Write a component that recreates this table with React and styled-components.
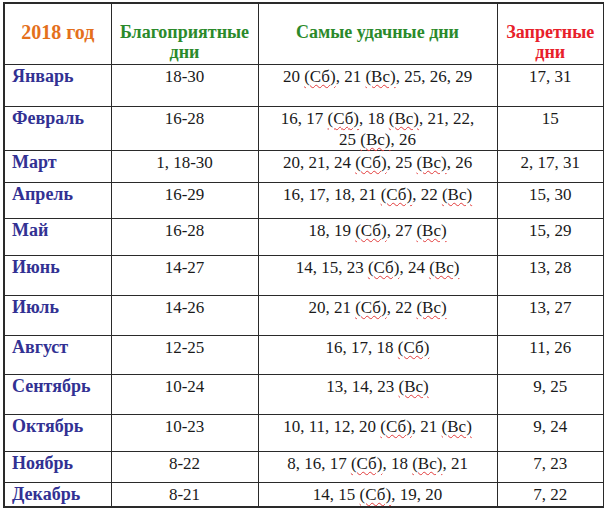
import React from "react";
import styled, { createGlobalStyle } from "styled-components";

const SERIF = `"Liberation Serif", "Times New Roman", Times, serif`;

const Global = createGlobalStyle`
  html, body { margin: 0; padding: 0; background: #fff; }
  body { font-family: ${SERIF}; }
`;

const Page = styled.div`
  padding: 2px 1px 0 3px;
  font-family: ${SERIF};
`;

const Table = styled.table`
  border-collapse: collapse;
  table-layout: fixed;
  width: 600px;
  border: 2px solid #2a2a2a;
  font-family: ${SERIF};
  font-size: 17px;
  line-height: 21px;
  color: #1a1a1a;
`;

const HeadRow = styled.tr`
  height: 61px;
`;

const HeadCell = styled.th`
  border: 1px solid #2a2a2a;
  vertical-align: top;
  padding: 18px 2px 0;
  text-align: center;
  font-family: ${SERIF};
  font-weight: bold;
  font-size: ${(p) => p.$size || 18}px;
  line-height: 20px;
  color: ${(p) => p.$color};
`;

const Row = styled.tr`
  height: ${(p) => p.$h}px;
`;

const MonthCell = styled.td`
  border: 1px solid #2a2a2a;
  vertical-align: top;
  padding: 1px 4px 0 7px;
  text-align: left;
  font-family: ${SERIF};
  font-size: 18px;
  line-height: 21px;
  font-weight: bold;
  color: #323193;
`;

const Cell = styled.td`
  border: 1px solid #2a2a2a;
  vertical-align: top;
  padding: 1px 4px 0;
  text-align: center;
  font-family: ${SERIF};
  font-size: 17px;
  line-height: 21px;
`;

const Marked = styled.span`
  text-decoration: underline wavy #e23b3b;
  text-decoration-thickness: 1px;
  text-underline-offset: 2px;
`;

const rows = [
  { m: "Январь", f: "18-30", b: "20 (Сб), 21 (Вс), 25, 26, 29", z: "17, 31", h: 42 },
  { m: "Февраль", f: "16-28", b: "16, 17 (Сб), 18 (Вс), 21, 22,\n25 (Вс), 26", z: "15", h: 43 },
  { m: "Март", f: "1, 18-30", b: "20, 21, 24 (Сб), 25 (Вс), 26", z: "2, 17, 31", h: 32 },
  { m: "Апрель", f: "16-29", b: "16, 17, 18, 21 (Сб), 22 (Вс)", z: "15, 30", h: 36 },
  { m: "Май", f: "16-28", b: "18, 19 (Сб), 27 (Вс)", z: "15, 29", h: 37 },
  { m: "Июнь", f: "14-27", b: "14, 15, 23 (Сб), 24 (Вс)", z: "13, 28", h: 40 },
  { m: "Июль", f: "14-26", b: "20, 21 (Сб), 22 (Вс)", z: "13, 27", h: 40 },
  { m: "Август", f: "12-25", b: "16, 17, 18 (Сб)", z: "11, 26", h: 39 },
  { m: "Сентябрь", f: "10-24", b: "13, 14, 23 (Вс)", z: "9, 25", h: 40 },
  { m: "Октябрь", f: "10-23", b: "10, 11, 12, 20 (Сб), 21 (Вс)", z: "9, 24", h: 37 },
  { m: "Ноябрь", f: "8-22", b: "8, 16, 17 (Сб), 18 (Вс), 21", z: "7, 23", h: 31 },
  { m: "Декабрь", f: "8-21", b: "14, 15 (Сб), 19, 20", z: "7, 22", h: 25 },
];

function renderDays(text) {
  return text.split("\n").map((line, li) => {
    const parts = line.split(/(\((?:Сб|Вс)\))/);
    return (
      <React.Fragment key={li}>
        {li > 0 && <br />}
        {parts.map((p, i) =>
          /^\((Сб|Вс)\)$/.test(p) ? <Marked key={i}>{p}</Marked> : <React.Fragment key={i}>{p}</React.Fragment>
        )}
      </React.Fragment>
    );
  });
}

export default function App() {
  return (
    <Page>
      <Global />
      <Table>
        <colgroup>
          <col style={{ width: 107 }} />
          <col style={{ width: 147 }} />
          <col style={{ width: 239 }} />
          <col style={{ width: 107 }} />
        </colgroup>
        <thead>
          <HeadRow>
            <HeadCell $color="#e4701c" $size={20}>2018 год</HeadCell>
            <HeadCell $color="#2b8a2b">Благоприятные<br />дни</HeadCell>
            <HeadCell $color="#2b8a2b">Самые удачные дни</HeadCell>
            <HeadCell $color="#e8202a">Запретные<br />дни</HeadCell>
          </HeadRow>
        </thead>
        <tbody>
          {rows.map((r) => (
            <Row key={r.m} $h={r.h}>
              <MonthCell>{r.m}</MonthCell>
              <Cell>{r.f}</Cell>
              <Cell>{renderDays(r.b)}</Cell>
              <Cell>{r.z}</Cell>
            </Row>
          ))}
        </tbody>
      </Table>
    </Page>
  );
}
